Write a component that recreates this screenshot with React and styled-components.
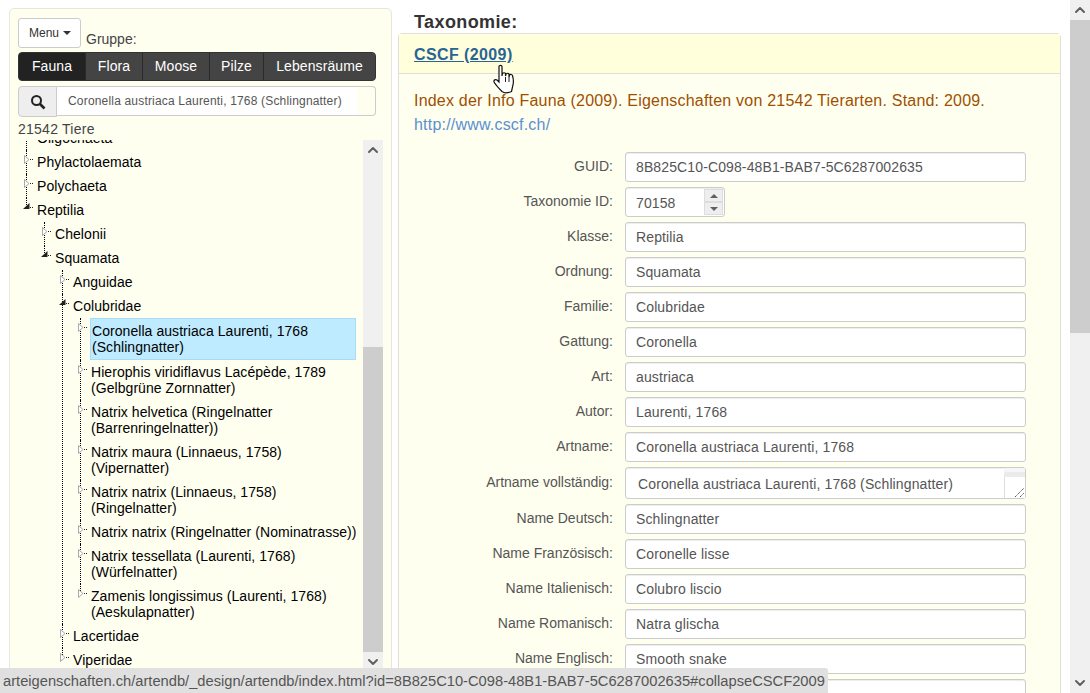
import React from 'react';
import styled, { createGlobalStyle } from 'styled-components';
import { ChevronUp, ChevronDown } from 'lucide-react';

const GlobalStyle = createGlobalStyle`
  html, body {
    margin: 0;
    padding: 0;
    height: 100%;
    overflow: hidden;
    background: #fff;
    font-family: "Liberation Sans", Arial, sans-serif;
    font-size: 14px;
    color: #333;
  }
  * { box-sizing: border-box; }
`;

const Page = styled.div`
  position: relative;
  display: flex;
  width: 1090px;
  height: 693px;
  overflow: hidden;
`;

const Sidebar = styled.aside`
  flex: 0 0 383px;
  height: 720px;
  margin: 8px 0 0 9px;
  padding: 9px 8px 0;
  background: #fffff0;
  border: 1px solid #e6e6dc;
  border-radius: 5px;
`;

const MenuRow = styled.div`
  display: flex;
  align-items: flex-end;
  gap: 5px;
  height: 30px;
`;

const MenuButton = styled.div`
  display: flex;
  align-items: center;
  gap: 4px;
  width: 63px;
  height: 30px;
  padding-left: 10px;
  background: #fff;
  border: 1px solid #ccc;
  border-radius: 3px;
  font-size: 12px;
  color: #333;
`;

const Caret = styled.span`
  width: 0;
  height: 0;
  border-top: 4px solid #333;
  border-left: 4px solid transparent;
  border-right: 4px solid transparent;
`;

const GroupLabel = styled.span`
  line-height: 17px;
  color: #444;
`;

const GroupTabs = styled.div`
  display: flex;
  width: 358px;
  height: 29px;
  margin-top: 4px;
  overflow: hidden;
  background: #444;
  border: 1px solid #333;
  border-radius: 4px;
`;

const GroupTab = styled.div`
  flex: 0 0 ${(props) => props.$width}px;
  line-height: 27px;
  letter-spacing: 0.1px;
  text-align: center;
  color: #fff;
  background: ${(props) => (props.$active ? '#222' : '#444')};
  border-left: ${(props) => (props.$first ? 'none' : '1px solid #2a2a2a')};
`;

const SearchGroup = styled.div`
  display: flex;
  width: 358px;
  height: 31px;
  margin-top: 5px;
`;

const SearchAddon = styled.div`
  display: flex;
  flex: 0 0 39px;
  align-items: center;
  justify-content: center;
  background: #eee;
  border: 1px solid #ccc;
  border-radius: 4px 0 0 4px;
`;

const SearchBox = styled.div`
  flex: 1;
  height: 30px;
  border: 1px solid #ccc;
  border-left: none;
  border-radius: 0 4px 4px 0;
`;

const SearchText = styled.div`
  width: 300px;
  height: 28px;
  padding-left: 11px;
  line-height: 28px;
  letter-spacing: 0.18px;
  white-space: nowrap;
  font-size: 12px;
  color: #555;
  background: #fff;
`;

const Count = styled.div`
  height: 20px;
  margin-top: 2px;
  line-height: 20px;
  letter-spacing: 0.25px;
  color: #444;
`;

const TreeFrame = styled.div`
  position: relative;
  width: 365px;
  height: 560px;
  margin-top: 1px;
  overflow: hidden;
`;

const TreeList = styled.ul`
  margin: ${(props) => (props.$root ? '-14px 0 0' : '0')};
  padding: 0;
  width: ${(props) => (props.$root ? '338px' : 'auto')};
  list-style: none;
`;

const TreeItem = styled.li`
  position: relative;
  padding-left: 18px;
  &::before {
    content: '';
    position: absolute;
    left: 8px;
    top: 0;
    height: ${(props) => (props.$last ? '9px' : '100%')};
    border-left: 1px dotted #000;
  }
`;

const TreeLabel = styled.div`
  padding: 4px 0 4px 1px;
  line-height: 16px;
  letter-spacing: 0.06px;
  white-space: pre;
  color: #000;
  ${(props) => props.$selected && `
    background: #beebff;
    border: 1px solid #a8dcf8;
  `}
`;

const MarkerIcon = styled.svg`
  position: absolute;
  left: 4px;
  top: 3px;
`;

const ScrollTrack = styled.div`
  display: flex;
  flex-direction: column;
  align-items: center;
  background: #f0f0f0;
`;

const TreeScroll = styled(ScrollTrack)`
  position: absolute;
  right: 0;
  top: 0;
  width: 20px;
  height: 100%;
`;

const ScrollThumb = styled.div`
  align-self: stretch;
  height: ${(props) => props.$height}px;
  background: #cdcdcd;
  flex: none;
`;

const ScrollArrow = styled.div`
  display: flex;
  flex: none;
  align-items: center;
  justify-content: center;
  height: ${(props) => props.$height || 20}px;
  color: #606060;
`;

const Gap = styled.div`
  flex: none;
  height: ${(props) => props.$height}px;
`;

const Content = styled.main`
  flex: 0 0 663px;
  margin-left: 6px;
`;

const SectionTitle = styled.h4`
  height: 33px;
  margin: 0;
  padding: 13px 0 0 16px;
  line-height: 19px;
  letter-spacing: 0.4px;
  font-size: 18px;
  font-weight: bold;
  color: #333;
`;

const Panel = styled.section`
  height: 700px;
  background: #fffff0;
  border: 1px solid #e0e0d8;
  border-radius: 4px 4px 0 0;
`;

const PanelHeading = styled.div`
  position: relative;
  height: 40px;
  padding: 12px 15px 0;
  background: #ffffdc;
  border-bottom: 1px solid #e0e0d0;
`;

const PanelLink = styled.a`
  font-size: 16px;
  line-height: 18px;
  letter-spacing: 0.4px;
  font-weight: bold;
  color: #2a6496;
  text-decoration: underline;
`;

const HandCursor = styled.svg`
  position: absolute;
  left: 94px;
  top: 30px;
`;

const PanelBody = styled.div`
  padding: 15px 15px 0;
`;

const Description = styled.p`
  margin: 0;
  font-size: 16px;
  line-height: 24px;
  letter-spacing: 0.21px;
  color: #a04f00;
`;

const SourceLink = styled.a`
  display: block;
  font-size: 16px;
  line-height: 24px;
  letter-spacing: 0.2px;
  color: #5a90d0;
`;

const FieldForm = styled.div`
  display: flex;
  flex-direction: column;
  gap: 5px;
  margin-top: 15px;
`;

const FieldRow = styled.div`
  display: grid;
  grid-template-columns: 199px 401px;
  column-gap: 12px;
`;

const FieldLabel = styled.label`
  padding-top: ${(props) => (props.$area ? 7 : 6)}px;
  line-height: 17px;
  text-align: right;
  color: #555;
`;

const FieldControl = styled.div`
  position: relative;
  width: ${(props) => props.$width || 401}px;
  height: ${(props) => props.$height || 30}px;
`;

const FieldInput = styled.input`
  display: block;
  width: 100%;
  height: 100%;
  padding: ${(props) => (props.$area ? '2px 0 0 12px' : props.$spin ? '2px 10px 0' : '0 10px')};
  background: #fff;
  border: 1px solid #ccc;
  border-radius: 3px;
  box-shadow: inset 0 1px 1px rgba(0, 0, 0, 0.075);
  outline: none;
  letter-spacing: 0.12px;
  font: 14px "Liberation Sans", Arial, sans-serif;
  color: #555;
`;

const Spinner = styled.div`
  position: absolute;
  right: 2px;
  top: 2px;
  display: flex;
  flex-direction: column;
  width: 19px;
`;

const SpinButton = styled.div`
  display: flex;
  align-items: center;
  justify-content: center;
  height: 13px;
  background: #eee;
  border: 1px solid #ddd;
`;

const SpinArrow = styled.span`
  width: 0;
  height: 0;
  border-left: 4px solid transparent;
  border-right: 4px solid transparent;
  ${(props) => (props.$up ? 'border-bottom: 4px solid #606060;' : 'border-top: 4px solid #606060;')}
`;

const AreaScroll = styled.div`
  position: absolute;
  right: 1px;
  top: 1px;
  bottom: 1px;
  display: flex;
  flex-direction: column;
  width: 21px;
  background: #fff;
`;

const AreaStripe = styled.div`
  flex: none;
  height: ${(props) => props.$height}px;
  background: ${(props) => props.$color};
`;

const AreaRest = styled.div`
  flex: 1;
  border-left: 1px solid #ddd;
`;

const ResizeGrip = styled.svg`
  position: absolute;
  right: 1px;
  bottom: 1px;
`;

const PageScroll = styled(ScrollTrack)`
  position: absolute;
  right: 0;
  top: 0;
  width: 20px;
  height: 693px;
`;

const StatusBar = styled.div`
  position: absolute;
  left: 0;
  bottom: 0;
  width: 828px;
  height: 25px;
  padding-left: 3px;
  line-height: 26px;
  white-space: nowrap;
  font-size: 14.7px;
  color: #555;
  background: #e0e0e0;
  border-top-right-radius: 3px;
`;

const TABS = [
  { label: 'Fauna', width: 66, active: true },
  { label: 'Flora', width: 57 },
  { label: 'Moose', width: 67 },
  { label: 'Pilze', width: 54 },
  { label: 'Lebensräume', width: 112 },
];

const TREE = [
  { label: 'Oligochaeta' },
  { label: 'Phylactolaemata' },
  { label: 'Polychaeta' },
  {
    label: 'Reptilia',
    children: [
      { label: 'Chelonii' },
      {
        label: 'Squamata',
        children: [
          { label: 'Anguidae' },
          {
            label: 'Colubridae',
            children: [
              { label: 'Coronella austriaca Laurenti, 1768\n(Schlingnatter)', selected: true },
              { label: 'Hierophis viridiflavus Lacépède, 1789\n(Gelbgrüne Zornnatter)' },
              { label: 'Natrix helvetica (Ringelnatter\n(Barrenringelnatter))' },
              { label: 'Natrix maura (Linnaeus, 1758)\n(Vipernatter)' },
              { label: 'Natrix natrix (Linnaeus, 1758)\n(Ringelnatter)' },
              { label: 'Natrix natrix (Ringelnatter (Nominatrasse))' },
              { label: 'Natrix tessellata (Laurenti, 1768)\n(Würfelnatter)' },
              { label: 'Zamenis longissimus (Laurenti, 1768)\n(Aeskulapnatter)' },
            ],
          },
          { label: 'Lacertidae' },
          { label: 'Viperidae' },
        ],
      },
    ],
  },
];

const FIELDS = [
  { label: 'GUID', value: '8B825C10-C098-48B1-BAB7-5C6287002635' },
  { label: 'Taxonomie ID', value: '70158', spinner: true },
  { label: 'Klasse', value: 'Reptilia' },
  { label: 'Ordnung', value: 'Squamata' },
  { label: 'Familie', value: 'Colubridae' },
  { label: 'Gattung', value: 'Coronella' },
  { label: 'Art', value: 'austriaca' },
  { label: 'Autor', value: 'Laurenti, 1768' },
  { label: 'Artname', value: 'Coronella austriaca Laurenti, 1768' },
  { label: 'Artname vollständig', value: 'Coronella austriaca Laurenti, 1768 (Schlingnatter)', area: true },
  { label: 'Name Deutsch', value: 'Schlingnatter' },
  { label: 'Name Französisch', value: 'Coronelle lisse' },
  { label: 'Name Italienisch', value: 'Colubro liscio' },
  { label: 'Name Romanisch', value: 'Natra glischa' },
  { label: 'Name Englisch', value: 'Smooth snake' },
  { label: '', value: '' },
];

function Marker({ open }) {
  return (
    <MarkerIcon width="14" height="14" viewBox="0 0 14 14">
      {open ? (
        <path d="M1 8 L7.5 2 L7.5 8 Z" fill="#222" />
      ) : (
        <path d="M2.5 2.5 L7 6.5 L2.5 10.5 Z" fill="#fff" stroke="#aaa" />
      )}
      <line x1="8" y1="6.5" x2="12" y2="6.5" stroke="#222" strokeDasharray="1 1" />
    </MarkerIcon>
  );
}

function TreeNodes({ nodes, root }) {
  return (
    <TreeList $root={root}>
      {nodes.map((node, index) => (
        <TreeItem key={node.label} $last={index === nodes.length - 1}>
          <Marker open={!!node.children} />
          <TreeLabel $selected={node.selected}>{node.label}</TreeLabel>
          {node.children && <TreeNodes nodes={node.children} />}
        </TreeItem>
      ))}
    </TreeList>
  );
}

function Field({ field }) {
  return (
    <FieldRow>
      <FieldLabel $area={field.area}>{field.label ? `${field.label}:` : ''}</FieldLabel>
      <FieldControl $width={field.spinner ? 100 : 401} $height={field.area ? 32 : 30}>
        <FieldInput readOnly value={field.value} $area={field.area} $spin={field.spinner} />
        {field.spinner && (
          <Spinner>
            <SpinButton><SpinArrow $up /></SpinButton>
            <SpinButton><SpinArrow /></SpinButton>
          </Spinner>
        )}
        {field.area && (
          <AreaScroll>
            <AreaStripe $height={4} $color="#f6f6f6" />
            <AreaStripe $height={5} $color="#ebebeb" />
            <AreaRest />
          </AreaScroll>
        )}
        {field.area && (
          <ResizeGrip width="12" height="12" viewBox="0 0 12 12">
            <path d="M2 11 L11 2 M7 11 L11 7" stroke="#555" strokeWidth="1" strokeDasharray="1.4 0.6" />
          </ResizeGrip>
        )}
      </FieldControl>
    </FieldRow>
  );
}

export default function App() {
  return (
    <Page>
      <GlobalStyle />
      <Sidebar>
        <MenuRow>
          <MenuButton>Menu <Caret /></MenuButton>
          <GroupLabel>Gruppe:</GroupLabel>
        </MenuRow>
        <GroupTabs>
          {TABS.map((tab, index) => (
            <GroupTab key={tab.label} $width={tab.width} $active={tab.active} $first={index === 0}>
              {tab.label}
            </GroupTab>
          ))}
        </GroupTabs>
        <SearchGroup>
          <SearchAddon>
            <svg width="16" height="16" viewBox="0 0 16 16" fill="none" stroke="#222" strokeWidth="2">
              <circle cx="6.5" cy="6.5" r="4.5" />
              <path d="M10 10 L14.5 14.5" strokeWidth="2.6" />
            </svg>
          </SearchAddon>
          <SearchBox>
            <SearchText>Coronella austriaca Laurenti, 1768 (Schlingnatter)</SearchText>
          </SearchBox>
        </SearchGroup>
        <Count>21542 Tiere</Count>
        <TreeFrame>
          <TreeNodes nodes={TREE} root />
          <TreeScroll>
            <ScrollArrow><ChevronUp size={16} strokeWidth={3} /></ScrollArrow>
            <Gap $height={187} />
            <ScrollThumb $height={305} />
            <ScrollArrow><ChevronDown size={16} strokeWidth={3} /></ScrollArrow>
          </TreeScroll>
        </TreeFrame>
      </Sidebar>
      <Content>
        <SectionTitle>Taxonomie:</SectionTitle>
        <Panel>
          <PanelHeading>
            <PanelLink>CSCF (2009)</PanelLink>
            <HandCursor width="24" height="30" viewBox="0 0 24 30">
              <path
                d="M6 2.5 C6 1 9 1 9 2.5 L9 12 L9.5 9.5 C10.5 8.5 12 8.5 12.5 9.5 L12.5 12 L13 10 C14 9 15.5 9 16 10 L16 13 L16.5 11 C17.5 10 19 10.5 19.5 11.5 C20.5 15 20.5 20 19.5 23 L18.5 27.5 C15 29 11 29 9 27.5 C6 24.5 3 21.5 1 18 C0.5 16 2.5 15 4 16 L6 18 Z"
                fill="#fff"
                stroke="#111"
                strokeWidth="1.2"
              />
              <path d="M12.5 13 L12.5 18 M16 13 L16 18" stroke="#222" />
            </HandCursor>
          </PanelHeading>
          <PanelBody>
            <Description>Index der Info Fauna (2009). Eigenschaften von 21542 Tierarten. Stand: 2009.</Description>
            <SourceLink>http://www.cscf.ch/</SourceLink>
            <FieldForm>
              {FIELDS.map((field) => <Field key={field.label} field={field} />)}
            </FieldForm>
          </PanelBody>
        </Panel>
      </Content>
      <PageScroll>
        <ScrollArrow><ChevronUp size={16} strokeWidth={3} /></ScrollArrow>
        <ScrollThumb $height={313} />
        <Gap $height={340} />
        <ScrollArrow><ChevronDown size={16} strokeWidth={3} /></ScrollArrow>
      </PageScroll>
      <StatusBar>arteigenschaften.ch/artendb/_design/artendb/index.html?id=8B825C10-C098-48B1-BAB7-5C6287002635#collapseCSCF2009</StatusBar>
    </Page>
  );
}
